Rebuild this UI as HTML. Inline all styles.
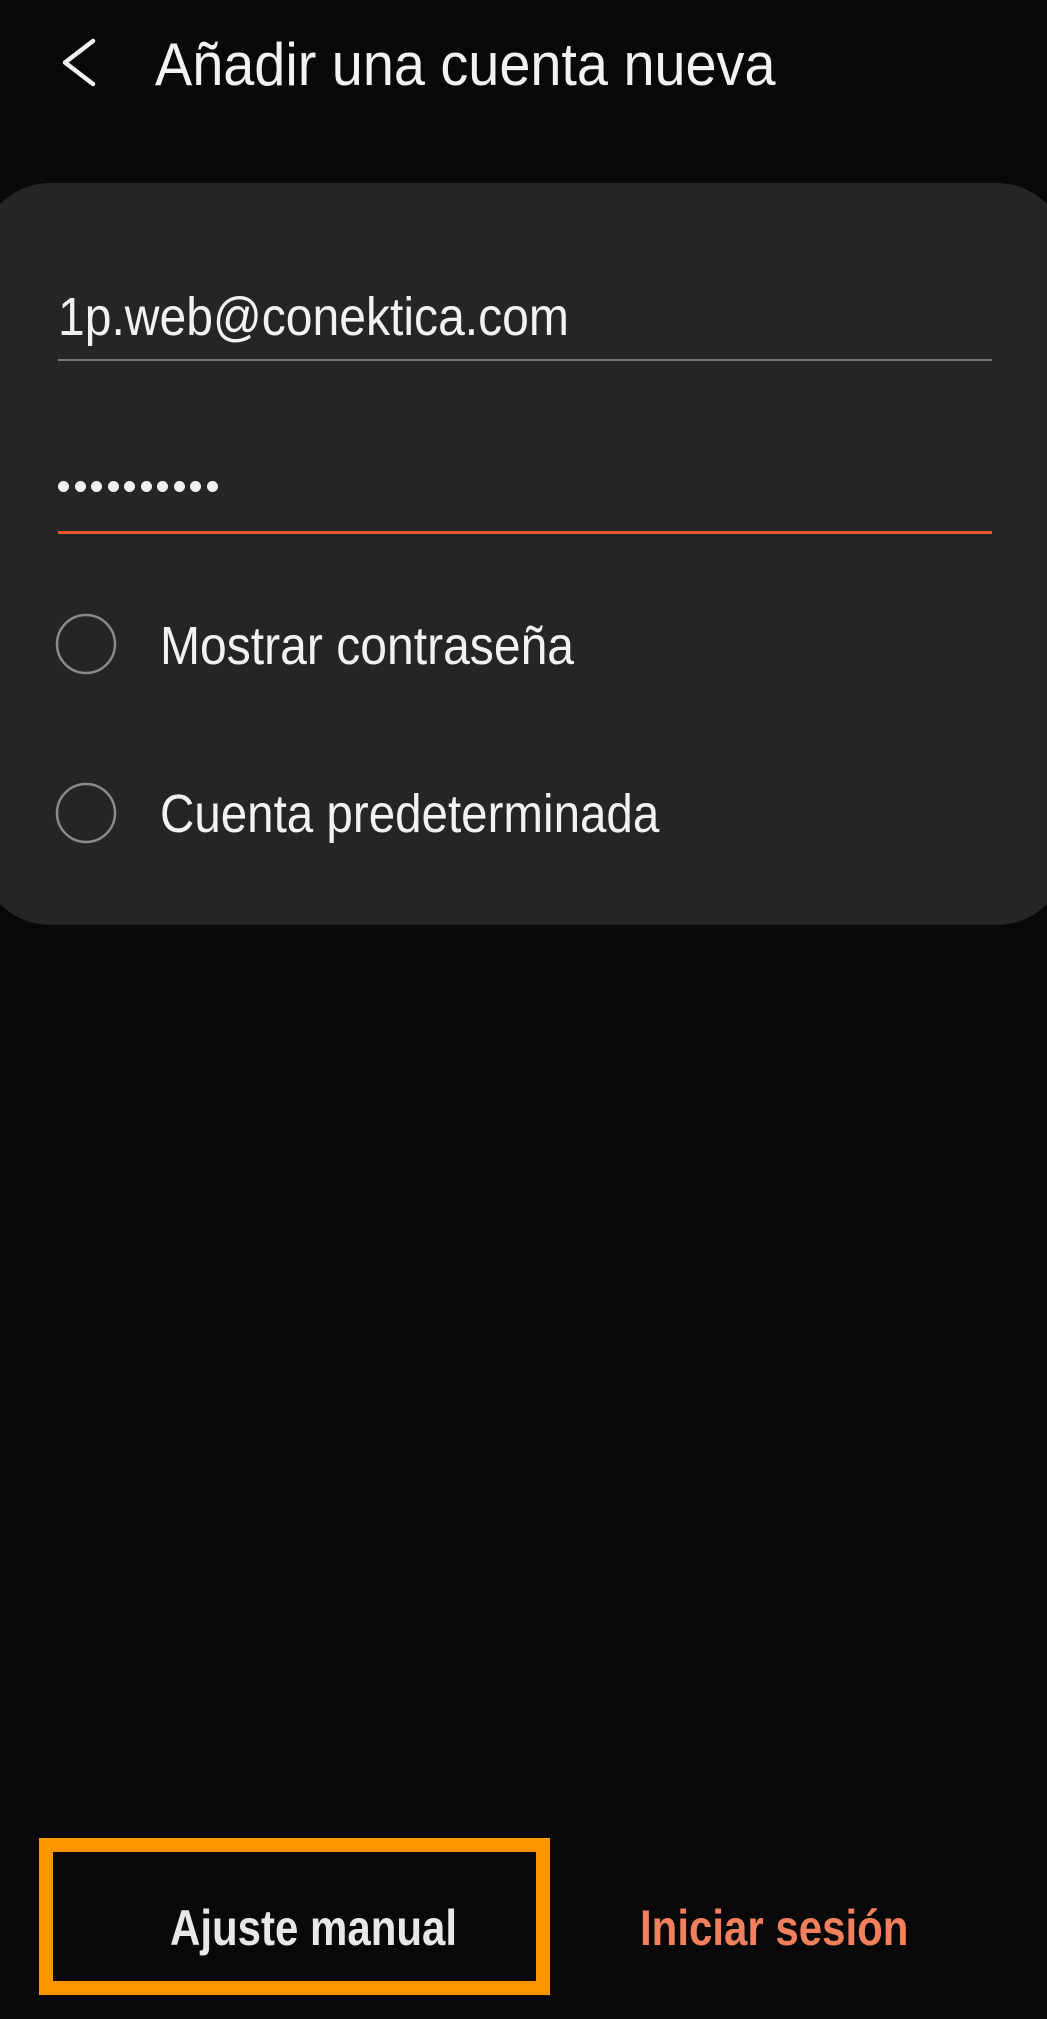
<!DOCTYPE html>
<html><head><meta charset="utf-8"><style>
html,body{margin:0;padding:0}
body{width:1047px;height:2019px;background:#080808;position:relative;overflow:hidden;font-family:"Liberation Sans",sans-serif;color:#f2f2f2}
.t{position:absolute;line-height:1;white-space:nowrap;transform-origin:0 0}
.card{position:absolute;left:-20px;top:183px;width:1087px;height:742px;background:#252525;border-radius:70px}
.dot{width:11px;height:11px;border-radius:50%;background:#f2f2f2}
</style></head><body>
<svg style="position:absolute;left:0;top:0" width="120" height="120"><polyline points="93,41 65,62.5 93,84" fill="none" stroke="#f2f2f2" stroke-width="4.5" stroke-linecap="round" stroke-linejoin="round"/></svg>
<div class="t" style="left:155px;top:35px;font-size:60px;transform:scaleX(0.93)">Añadir una cuenta nueva</div>
<div class="card"></div>
<div class="t" style="left:58px;top:290px;font-size:54px;transform:scaleX(0.89)">1p.web@conektica.com</div>
<div style="position:absolute;left:58px;top:359px;width:934px;height:2px;background:#777"></div>
<div style="position:absolute;left:58px;top:481px;display:flex;gap:5.5px"><div class="dot"></div><div class="dot"></div><div class="dot"></div><div class="dot"></div><div class="dot"></div><div class="dot"></div><div class="dot"></div><div class="dot"></div><div class="dot"></div><div class="dot"></div></div>
<div style="position:absolute;left:58px;top:531px;width:934px;height:3px;background:#e8582a"></div>
<svg style="position:absolute;left:0;top:580px" width="160" height="300"><circle cx="86" cy="64" r="29" fill="none" stroke="#8a8a8a" stroke-width="2.5"/><circle cx="86" cy="233" r="29" fill="none" stroke="#8a8a8a" stroke-width="2.5"/></svg>
<div class="t" style="left:160px;top:619px;font-size:54px;transform:scaleX(0.89)">Mostrar contraseña</div>
<div class="t" style="left:160px;top:787px;font-size:54px;transform:scaleX(0.88)">Cuenta predeterminada</div>
<div style="position:absolute;left:39px;top:1838px;width:483px;height:129px;border:14px solid #fe9400"></div>
<div class="t" style="left:170px;top:1903px;font-size:50px;font-weight:bold;color:#e8e8e8;transform:scaleX(0.84)">Ajuste manual</div>
<div class="t" style="left:640px;top:1903px;font-size:50px;font-weight:bold;color:#f2805d;transform:scaleX(0.84)">Iniciar sesión</div>
</body></html>
